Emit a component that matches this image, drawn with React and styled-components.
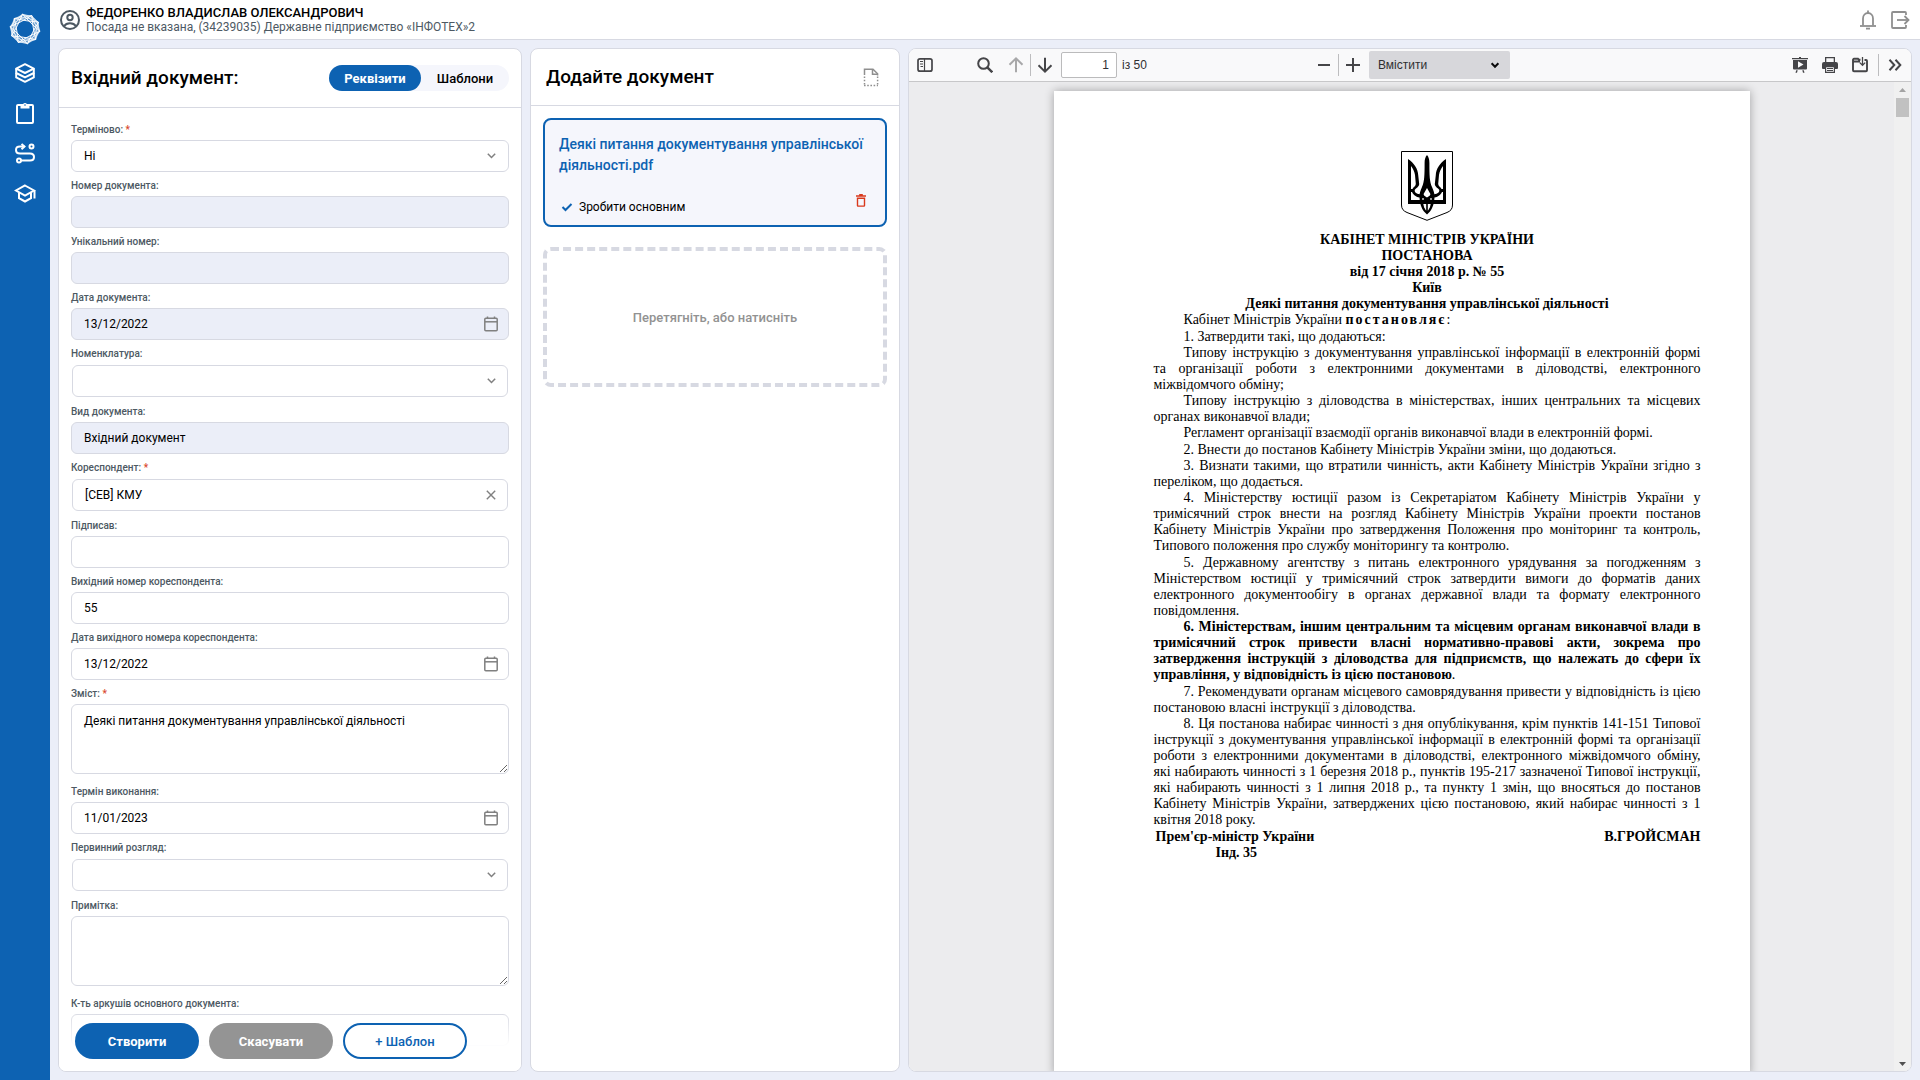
import React, { useState } from "react";
import styled, { createGlobalStyle, css } from "styled-components";

const blue = "#0d62b2";
const line = "#d7d9e2";
const tint = "#ebeef8";
const ui = `Roboto, "Noto Sans", sans-serif`;

const GlobalStyle = createGlobalStyle`
  *, *::before, *::after { box-sizing: border-box; }
  body { margin: 0; background: ${tint}; font-family: ${ui}; color: #000; }
  button, input, select, textarea { font-family: inherit; color: inherit; margin: 0; }
  p, h1, h2 { margin: 0; }
`;

/* ---------- shell ---------- */

const Shell = styled.div`
  display: flex;
  height: 100vh;
`;

const Sidebar = styled.nav`
  flex: none;
  width: 50px;
  display: flex;
  flex-direction: column;
  align-items: center;
  padding-top: 13px;
  background: ${blue};
`;

const Logo = styled.a`
  display: block;
  height: 32px;
  margin-bottom: 8px;
`;

const NavLink = styled.a`
  width: 40px;
  height: 40px;
  display: flex;
  align-items: center;
  justify-content: center;
  color: #fff;
`;

const Content = styled.div`
  flex: 1;
  min-width: 0;
  display: flex;
  flex-direction: column;
`;

const TopBar = styled.header`
  flex: none;
  height: 40px;
  display: flex;
  align-items: center;
  padding: 0 10px;
  background: #fff;
  border-bottom: 1px solid ${line};
`;

const User = styled.div`
  flex: 1;
  display: flex;
  align-items: center;
  gap: 6px;
  color: #4d5963;
`;

const UserText = styled.div`
  font-size: 12px;
  line-height: 15px;
`;

const UserName = styled.div`
  font-size: 13px;
  font-weight: 500;
  color: #000;
`;

const PlainButton = styled.button`
  padding: 0;
  border: 0;
  background: none;
  display: flex;
  align-items: center;
  justify-content: center;
  color: ${(p) => p.$color || "#8f8f8f"};
  cursor: pointer;
`;

const TopActions = styled.div`
  display: flex;
  align-items: center;
  gap: 14px;
`;

const Workspace = styled.main`
  flex: 1;
  min-height: 0;
  display: grid;
  grid-template-columns: minmax(0, 464fr) minmax(0, 370fr) minmax(0, 1004fr);
  gap: 8px;
  padding: 8px;
`;

const Panel = styled.section`
  position: relative;
  min-height: 0;
  display: flex;
  flex-direction: column;
  background: #fff;
  border: 1px solid ${line};
  border-radius: 8px;
  overflow: hidden;
`;

const PanelHeader = styled.div`
  flex: none;
  display: flex;
  align-items: center;
  justify-content: space-between;
  height: ${(p) => p.$height}px;
  padding: ${(p) => p.$padding};
  border-bottom: 1px solid ${line};
`;

const PanelTitle = styled.h1`
  font-size: 19px;
  line-height: 24px;
  font-weight: 500;
`;

/* ---------- form ---------- */

const Tabs = styled.div`
  display: flex;
  height: 26px;
  border-radius: 13px;
  background: #f5f6fc;
`;

const Tab = styled.button`
  height: 26px;
  width: ${(p) => (p.$active ? 92 : 88)}px;
  padding: 0;
  border: 0;
  border-radius: 13px;
  font-size: 13px;
  font-weight: ${(p) => (p.$active ? 700 : 500)};
  color: ${(p) => (p.$active ? "#fff" : "#000")};
  background: ${(p) => (p.$active ? blue : "transparent")};
`;

const FormBody = styled.form`
  flex: 1;
  min-height: 0;
  overflow: hidden;
  padding: 8px 12px 80px;
`;

const Field = styled.div`
  padding-top: 6px;
`;

const Label = styled.label`
  display: block;
  height: 16px;
  margin-bottom: 2px;
  font-size: 10px;
  line-height: 16px;
  font-weight: 500;
  color: #4d5963;
`;

const Required = styled.span`
  color: #d9472b;
`;

const Box = styled.div`
  position: relative;
  padding: ${(p) => (p.$inset ? "1px" : "0")};
`;

const control = css`
  display: block;
  width: 100%;
  border: 1px solid ${line};
  border-radius: 6px;
  font-size: 12px;
  line-height: 16px;
  color: #000;
  opacity: 1;
  appearance: none;
  outline: none;
  background: ${(p) => (p.$tinted ? tint : "#fff")};
`;

const TextInput = styled.input`
  ${control}
  height: 32px;
  padding: 0 40px 0 12px;
`;

const Select = styled.select`
  ${control}
  height: 32px;
  padding: 0 40px 0 12px;
`;

const Area = styled.textarea`
  ${control}
  height: 70px;
  margin-bottom: 4px;
  padding: 8px 12px;
  resize: vertical;
`;

const Adornment = styled.span`
  position: absolute;
  top: 0;
  bottom: 0;
  right: 0;
  width: 36px;
  display: flex;
  align-items: center;
  justify-content: center;
  color: #808080;
  pointer-events: none;
  button { pointer-events: auto; }
`;

const FormFooter = styled.div`
  position: absolute;
  left: 0;
  right: 0;
  bottom: 0;
  display: flex;
  gap: 10px;
  padding: 12px 16px;
  background: linear-gradient(rgba(255, 255, 255, 0), #fff 60%);
`;

const ActionButton = styled.button`
  width: 124px;
  height: 36px;
  padding: 0;
  border: ${(p) => (p.$outline ? `2px solid ${blue}` : "0")};
  border-radius: 18px;
  font-size: 13px;
  font-weight: ${(p) => (p.$outline ? 500 : 700)};
  color: ${(p) => (p.$outline ? blue : "#fff")};
  background: ${(p) => (p.$outline ? "#fff" : p.$muted ? "#949494" : blue)};
`;

/* ---------- documents ---------- */

const DocList = styled.div`
  display: flex;
  flex-direction: column;
  gap: 20px;
  padding: 12px;
`;

const DocCard = styled.article`
  display: flex;
  flex-direction: column;
  justify-content: space-between;
  gap: 18px;
  padding: 14px 14px 8px;
  border: 2px solid ${blue};
  border-radius: 8px;
  background: #f5f6fc;
`;

const DocName = styled.a`
  font-size: 14px;
  line-height: 21px;
  font-weight: 500;
  color: ${blue};
  text-decoration: none;
`;

const DocActions = styled.div`
  display: flex;
  justify-content: space-between;
  align-items: flex-start;
  padding-right: 5px;
`;

const MainMark = styled.button`
  display: flex;
  align-items: center;
  gap: 6px;
  height: 20px;
  padding: 0 0 0 2px;
  margin-top: 3px;
  border: 0;
  background: none;
  font-size: 12px;
  line-height: 16px;
  svg { color: ${blue}; }
`;

const DropZone = styled.button`
  height: 140px;
  border: 4px dashed ${line};
  border-radius: 8px;
  background: #fff;
  font-size: 13px;
  font-weight: 500;
  color: #929292;
`;

/* ---------- viewer ---------- */

const Toolbar = styled.div`
  flex: none;
  display: grid;
  grid-template-columns: 1fr auto 1fr;
  height: 33px;
  padding: 0 2px;
  background: #f9f9fa;
  border-bottom: 1px solid #c7c7c9;
  font-family: "Liberation Sans", Arial, sans-serif;
  font-size: 12px;
  color: #2f2f31;
`;

const ToolGroup = styled.div`
  display: flex;
  align-items: center;
  gap: ${(p) => p.$gap || 0}px;
  justify-content: ${(p) => (p.$end ? "flex-end" : "flex-start")};
`;

const ToolButton = styled.button`
  width: 28px;
  height: 28px;
  margin-right: ${(p) => p.$after || 0}px;
  padding: 0;
  border: 0;
  background: none;
  color: #454548;
  opacity: ${(p) => (p.disabled ? 0.45 : 1)};
  display: flex;
  align-items: center;
  justify-content: center;
`;

const ToolRule = styled.span`
  width: 1px;
  height: 22px;
  background: #bdbdbf;
`;

const PageInput = styled.input`
  width: 56px;
  height: 26px;
  margin: 0 5px 0 2px;
  padding: 0 7px;
  border: 1px solid #bbbbbc;
  border-radius: 2px;
  background: #fff;
  font-size: 12px;
  text-align: right;
`;

const ScaleBox = styled.div`
  position: relative;
  margin-left: 2px;
`;

const ScaleSelect = styled.select`
  display: block;
  width: 141px;
  height: 28px;
  padding: 0 30px 0 9px;
  border: 0;
  border-radius: 2px;
  appearance: none;
  background: #d7d7db;
  color: #2f2f31;
  font-size: 12px;
`;

const ScaleCaret = styled(Adornment)`
  width: 30px;
  color: #0c0c0d;
`;

const ViewArea = styled.div`
  flex: 1;
  min-height: 0;
  display: flex;
  background: #ececee;
`;

const Canvas = styled.div`
  flex: 1;
  min-width: 0;
  overflow: hidden;
  padding-top: 9px;
`;

const Sheet = styled.article`
  width: 696px;
  max-width: 100%;
  aspect-ratio: 210 / 297;
  margin: 0 auto;
  padding: 60px 49px 0 100px;
  background: #fff;
  box-shadow: 0 0 9px rgba(0, 0, 0, 0.32);
  font-family: "Liberation Serif", "Times New Roman", serif;
  font-size: 14px;
  line-height: 16px;
`;

const Emblem = styled.svg`
  display: block;
  margin: 0 auto 11px;
`;

const Heading = styled.p`
  text-align: center;
  font-weight: 700;
`;

const Clause = styled.p`
  text-align: justify;
  text-indent: 30px;
  padding-top: ${(p) => (p.$spaced ? 1 : 0)}px;
  font-weight: ${(p) => (p.$bold ? 700 : 400)};
`;

const Spaced = styled.b`
  letter-spacing: 2px;
`;

const Regular = styled.span`
  font-weight: 400;
`;

const Signature = styled.div`
  display: flex;
  justify-content: space-between;
  padding: 1px 0 0 2px;
  font-weight: 700;
`;

const Index = styled.p`
  padding-left: 62px;
  font-weight: 700;
`;

const ScrollTrack = styled.div`
  flex: none;
  width: 17px;
  display: flex;
  flex-direction: column;
  justify-content: space-between;
  align-items: center;
  padding: 6px 0 5px;
  background: #f0f0f0;
`;

const ScrollTop = styled.div`
  display: flex;
  flex-direction: column;
  align-items: center;
  gap: 6px;
`;

const Thumb = styled.div`
  width: 13px;
  height: 19px;
  background: #c1c1c1;
`;

/* ---------- icons ---------- */

const Stroke = ({ w, h, sw = 2, children, ...rest }) => (
  <svg width={w} height={h} viewBox={`0 0 ${w} ${h}`} fill="none" stroke="currentColor" strokeWidth={sw} aria-hidden="true" {...rest}>
    {children}
  </svg>
);

const SPOKES = 10;
const ring = Array.from({ length: SPOKES }, (_, i) => {
  const a = (i * 2 * Math.PI) / SPOKES + 0.15;
  return [16 + 15 * Math.cos(a), 16 + 15 * Math.sin(a)];
});
const chord = (step, bulge) =>
  ring
    .map(([x, y], i) => {
      const [u, v] = ring[(i + step) % SPOKES];
      const cx = 16 + ((x + u) / 2 - 16) * bulge;
      const cy = 16 + ((y + v) / 2 - 16) * bulge;
      return `M${x.toFixed(2)} ${y.toFixed(2)}Q${cx.toFixed(2)} ${cy.toFixed(2)} ${u.toFixed(2)} ${v.toFixed(2)}`;
    })
    .join("");

const LogoIcon = () => (
  <svg width="32" height="32" viewBox="0 0 32 32" fill="none" stroke="#fff" aria-hidden="true">
    <circle cx="16" cy="16" r="11.5" strokeWidth="6" opacity="0.25" />
    <path d={chord(3, 0.9)} strokeWidth="1" />
    <path d={chord(3, 1.5)} strokeWidth="0.8" opacity="0.9" />
    <path d={chord(2, 1.2)} strokeWidth="0.8" opacity="0.8" />
  </svg>
);

const LayersIcon = () => (
  <Stroke w={20} h={20} strokeLinejoin="round">
    <path d="M10 1.2 18.8 5.6 10 10 1.2 5.6Z" />
    <path d="M1.2 5.6V10L10 14.4 18.8 10V5.6" />
    <path d="M1.2 10V14.4L10 18.8 18.8 14.4V10" />
  </Stroke>
);

const ClipboardIcon = () => (
  <Stroke w={18} h={22}>
    <rect x="1" y="3" width="16" height="18" rx="1" />
    <path d="M4.5 2.5H7a2.1 2.1 0 0 1 4 0h2.5V6.5h-9Z" fill="currentColor" stroke="none" />
    <circle cx="9" cy="3" r="0.8" fill={blue} stroke="none" />
  </Stroke>
);

const RouteIcon = () => (
  <Stroke w={20} h={21}>
    <path d="M9.5 3.6H5C2.4 3.6 1 5.1 1 7s1.4 3.5 4 3.5h10c2.6 0 4 1.5 4 3.5s-1.4 3.5-4 3.5H6" />
    <path d="M6.5.9 9.5 3.6 6.5 6.3" />
    <circle cx="16.5" cy="3.6" r="2" />
    <circle cx="4" cy="17.5" r="2" />
  </Stroke>
);

const SchoolIcon = () => (
  <Stroke w={22} h={19}>
    <path d="M11 1.5 20 6.5 11 11.5 2 6.5Z" />
    <path d="M5 8.5V14.2L11 17.5 17 14.2V8.5" />
    <path d="M20.5 6.5V14.5" />
  </Stroke>
);

const UserIcon = () => (
  <Stroke w={20} h={20}>
    <circle cx="10" cy="10" r="9" />
    <circle cx="10" cy="7.5" r="2.7" />
    <path d="M4 16.3C5.5 14 7.5 13.3 10 13.3s4.5.7 6 3" />
  </Stroke>
);

const BellIcon = () => (
  <Stroke w={18} h={20} sw={1.8}>
    <path d="M4 15.5V8.5C4 5.3 6.2 3 9 3s5 2.3 5 5.5v7" />
    <path d="M1 16H17" />
    <path d="M9 .4V3" />
    <path d="M7 18.6H11" />
  </Stroke>
);

const LogoutIcon = () => (
  <Stroke w={19} h={18} sw={1.8}>
    <path d="M15 4V2a1 1 0 0 0-1-1H2a1 1 0 0 0-1 1v14a1 1 0 0 0 1 1h12a1 1 0 0 0 1-1v-2" />
    <path d="M6 9H17" />
    <path d="M13.5 5 17.5 9 13.5 13" />
  </Stroke>
);

const ChevronIcon = () => (
  <Stroke w={9} h={6} sw={1.5}>
    <path d="M.8.8 4.5 4.5 8.2.8" />
  </Stroke>
);

const CalendarIcon = () => (
  <Stroke w={14} h={16} sw={1.5}>
    <rect x=".8" y="2.2" width="12.4" height="12.6" rx="1" />
    <path d="M1 5.8H13" />
    <path d="M3.5.5V2.5M10.5.5V2.5" />
  </Stroke>
);

const CloseIcon = () => (
  <Stroke w={10} h={10} sw={1.4}>
    <path d="M.8.8 9.2 9.2M9.2.8.8 9.2" />
  </Stroke>
);

const DraftIcon = () => (
  <Stroke w={16} h={19} sw={1.5}>
    <path d="M1.5 7V1.2H10L14.6 5.8V7.5" />
    <path d="M9.5 1.2V6.2H14.6" />
    <path d="M1.5 8.5V18M14.6 8.5V18" strokeDasharray="1.6 1.6" />
    <path d="M1 17.5H15" strokeDasharray="1.6 1.6" />
  </Stroke>
);

const CheckIcon = () => (
  <Stroke w={12} h={10} sw={2}>
    <path d="M1.5 5 4.5 8 10.5 2" />
  </Stroke>
);

const TrashIcon = () => (
  <Stroke w={10} h={13} sw={1.4}>
    <path d="M0 2H10M3.2.8H6.8" />
    <path d="M1.5 4.2H8.5V11.5a.6.6 0 0 1-.6.6H2.1a.6.6 0 0 1-.6-.6Z" />
  </Stroke>
);

const PaneIcon = () => (
  <Stroke w={16} h={16} sw={1.7}>
    <rect x="1" y="1.8" width="14" height="12.4" rx="2" />
    <path d="M7.5 2V14" strokeWidth="1.2" />
    <path d="M3 4.5H6M3 7H6M3.5 9.5H6" strokeWidth="1" />
  </Stroke>
);

const SearchIcon = () => (
  <Stroke w={16} h={16}>
    <circle cx="6.5" cy="6.5" r="5.3" />
    <path d="M10.3 10.3 15.3 15.3" strokeWidth="2.4" />
  </Stroke>
);

const ArrowIcon = ({ down }) => (
  <Stroke w={16} h={16} sw={2}>
    <path d={down ? "M8 .8V14.5M1.5 8.3 8 14.6 14.5 8.3" : "M8 15.2V1.5M1.5 7.7 8 1.4 14.5 7.7"} />
  </Stroke>
);

const MinusIcon = () => (
  <Stroke w={14} h={14}>
    <path d="M1 7H13" />
  </Stroke>
);

const PlusIcon = () => (
  <Stroke w={14} h={14}>
    <path d="M0 7H14M7 0V14" />
  </Stroke>
);

const PresentIcon = () => (
  <svg width="16" height="16" viewBox="0 0 16 16" fill="currentColor" aria-hidden="true">
    <path d="M0 1h7V0h2v1h7v1.3H0Z" />
    <path fillRule="evenodd" d="M1 3h14v8.5a1 1 0 0 1-1 1H2a1 1 0 0 1-1-1ZM6 4.3v6.4L11.5 7.5Z" />
    <path d="M4.2 13.2h1.5L5 15.8H3.5ZM10.3 13.2h1.5l.7 2.6H11Z" />
  </svg>
);

const PrintIcon = () => (
  <svg width="16" height="16" viewBox="0 0 16 16" fill="currentColor" aria-hidden="true">
    <path d="M3 0h10v5h-1.3V1.2H4.3V5H3Z" />
    <path d="M2 5h12a2 2 0 0 1 2 2v4a1 1 0 0 1-1 1h-2V9H3v3H1a1 1 0 0 1-1-1V7a2 2 0 0 1 2-2Z" />
    <path fillRule="evenodd" d="M3 9h10v7H3ZM4.2 10.2v4.6h7.6v-4.6Z" />
    <path d="M5 11h6v1H5ZM5 13h6v1H5Z" />
  </svg>
);

const FolderIcon = () => (
  <svg width="16" height="16" viewBox="0 0 16 16" fill="none" stroke="currentColor" aria-hidden="true">
    <path d="M8 4.5H1.5M8.5 2.8H7L6 1.8H2a1 1 0 0 0-1 1v10.4a1 1 0 0 0 1 1h12a1 1 0 0 0 1-1V4a1 1 0 0 0-1-1h-1.5" strokeWidth="1.9" />
    <path d="M10.5 0V8M7.8 5.6 10.5 8.3 13.2 5.6" strokeWidth="1.3" />
  </svg>
);

const MoreIcon = () => (
  <Stroke w={14} h={12}>
    <path d="M1.5.8 6.3 6 1.5 11.2M7.5.8 12.3 6 7.5 11.2" />
  </Stroke>
);

const CaretIcon = () => (
  <Stroke w={10} h={7} sw={2}>
    <path d="M1.6 1.2 5 4.8 8.4 1.2" />
  </Stroke>
);

const Triangle = ({ down }) => (
  <svg width="7" height="4" viewBox="0 0 7 4" aria-hidden="true">
    <path d={down ? "M0 0H7L3.5 4Z" : "M0 4H7L3.5 0Z"} fill={down ? "#505050" : "#a3a3a3"} />
  </svg>
);

const Trident = () => (
  <Emblem width="53" height="70" viewBox="0 0 53 70" fill="none" stroke="#000" role="img" aria-label="Герб України">
    <path d="M.5.5H51.5V54C51.5 58 49.5 60 46 61.5L26 69.3 6 61.5C2.5 60 .5 58 .5 54Z" strokeWidth="1" />
    <path fill="#000" stroke="none" fillRule="evenodd" d="M7 8C13 12 17 18 17.2 24L18.2 33C18.2 34.5 17 36 15 37.5L14 38.5C13 40 14.5 42.5 17.5 43L20 43.5V46.5C16 46.5 12.5 44.5 11 41H10V49H42V41H41C39.5 44.5 36 46.5 32 46.5V43.5L34.5 43C37.5 42.5 39 40 38 38.5L37 37.5C35 36 33.8 34.5 33.8 33L34.8 24C35 18 39 12 45 8V53H7ZM10 15V38H11.5C12 36.5 14.8 35 14.8 33L14 24C13.5 20.5 12 17.5 10 15ZM42 15C40 17.5 38.5 20.5 38 24L37.2 33C37.2 35 40 36.5 40.5 38H42Z" />
    <path fill="#000" stroke="none" fillRule="evenodd" d="M26 4C27.7 6 28.4 8.5 28.4 12C28.4 24 28.6 31 31 36C32.5 39.5 33.5 42 33.5 45C33.5 52 31.5 57.5 29 60.5L26 63.5 23 60.5C20.5 57.5 18.5 52 18.5 45C18.5 42 19.5 39.5 21 36C23.4 31 23.6 24 23.6 12C23.6 8.5 24.3 6 26 4ZM26 37L22.6 43C22.6 45 24.5 45.3 26 46.5C27.5 45.3 29.4 45 29.4 43Z" />
    <path d="M22 47V49M30 47V49M23 53.5C23.3 55.5 23.8 57 24.6 58V53.5ZM29 53.5C28.7 55.5 28.2 57 27.4 58V53.5Z" stroke="#fff" strokeWidth="1.2" fill="#fff" />
  </Emblem>
);

/* ---------- data ---------- */

const fields = [
  { id: "urgent", label: "Терміново:", required: true, type: "select", value: "Ні" },
  { id: "number", label: "Номер документа:", tinted: true, value: "" },
  { id: "unique", label: "Унікальний номер:", tinted: true, value: "" },
  { id: "date", label: "Дата документа:", type: "date", tinted: true, value: "13/12/2022" },
  { id: "nomenclature", label: "Номенклатура:", type: "select", inset: true, value: "" },
  { id: "kind", label: "Вид документа:", tinted: true, value: "Вхідний документ" },
  { id: "correspondent", label: "Кореспондент:", required: true, type: "clear", inset: true, value: "[СЕВ] КМУ" },
  { id: "signed", label: "Підписав:", value: "" },
  { id: "outNumber", label: "Вихідний номер кореспондента:", value: "55" },
  { id: "outDate", label: "Дата вихідного номера кореспондента:", type: "date", value: "13/12/2022" },
  { id: "summary", label: "Зміст:", required: true, type: "area", value: "Деякі питання документування управлінської діяльності" },
  { id: "deadline", label: "Термін виконання:", type: "date", value: "11/01/2023" },
  { id: "review", label: "Первинний розгляд:", type: "select", inset: true, value: "" },
  { id: "note", label: "Примітка:", type: "area", value: "" },
  { id: "sheets", label: "К-ть аркушів основного документа:", value: "" },
];

const effectiveDates =
  "8. Ця постанова набирає чинності з дня опублікування, крім пунктів 141-151 Типової інструкції з документування управлінської інформації в електронній формі та організації роботи з електронними документами в діловодстві, електронного міжвідомчого обміну, які\u00a0набирають чинності з 1 березня 2018 р., пунктів 195-217 зазначеної Типової інструкції, які\u00a0набирають чинності з 1 липня 2018 р., та пункту 1 змін, що вносяться до постанов Кабінету Міністрів України, затверджених цією постановою, який набирає чинності з 1 квітня 2018 року.";

const FormField = ({ id, label, required, type, tinted, inset, value }) => (
  <Field>
    <Label htmlFor={id}>
      {label}
      {required && <Required> *</Required>}
    </Label>
    <Box $inset={inset}>
      {type === "select" ? (
        <Select id={id} defaultValue={value}>
          <option>{value}</option>
        </Select>
      ) : type === "area" ? (
        <Area id={id} defaultValue={value} />
      ) : (
        <TextInput id={id} type="text" $tinted={tinted} readOnly={tinted} defaultValue={value} />
      )}
      {type === "select" && (
        <Adornment>
          <ChevronIcon />
        </Adornment>
      )}
      {type === "date" && (
        <Adornment>
          <PlainButton type="button" aria-label="Обрати дату" $color="#808080">
            <CalendarIcon />
          </PlainButton>
        </Adornment>
      )}
      {type === "clear" && (
        <Adornment>
          <PlainButton type="button" aria-label="Очистити" $color="#808080">
            <CloseIcon />
          </PlainButton>
        </Adornment>
      )}
    </Box>
  </Field>
);

const nav = [
  ["Документи", LayersIcon],
  ["Завдання", ClipboardIcon],
  ["Маршрути", RouteIcon],
  ["Навчання", SchoolIcon],
];

export default function App() {
  const [page, setPage] = useState("1");
  return (
    <>
      <GlobalStyle />
      <Shell>
        <Sidebar>
          <Logo href="#" aria-label="Головна">
            <LogoIcon />
          </Logo>
          {nav.map(([name, Icon]) => (
            <NavLink key={name} href="#" aria-label={name}>
              <Icon />
            </NavLink>
          ))}
        </Sidebar>
        <Content>
          <TopBar>
            <User>
              <UserIcon />
              <UserText>
                <UserName>ФЕДОРЕНКО ВЛАДИСЛАВ ОЛЕКСАНДРОВИЧ</UserName>
                Посада не вказана, (34239035) Державне підприємство «ІНФОТЕХ»2
              </UserText>
            </User>
            <TopActions>
              <PlainButton aria-label="Сповіщення">
                <BellIcon />
              </PlainButton>
              <PlainButton aria-label="Вийти">
                <LogoutIcon />
              </PlainButton>
            </TopActions>
          </TopBar>
          <Workspace>
            <Panel>
              <PanelHeader $height={59} $padding="0 12px">
                <PanelTitle>Вхідний документ:</PanelTitle>
                <Tabs>
                  <Tab type="button" $active>Реквізити</Tab>
                  <Tab type="button">Шаблони</Tab>
                </Tabs>
              </PanelHeader>
              <FormBody>
                {fields.map((f) => (
                  <FormField key={f.id} {...f} />
                ))}
              </FormBody>
              <FormFooter>
                <ActionButton type="button">Створити</ActionButton>
                <ActionButton type="button" $muted>Скасувати</ActionButton>
                <ActionButton type="button" $outline>+ Шаблон</ActionButton>
              </FormFooter>
            </Panel>

            <Panel>
              <PanelHeader $height={57} $padding="0 20px 0 15px">
                <PanelTitle as="h2">Додайте документ</PanelTitle>
                <PlainButton aria-label="Новий документ">
                  <DraftIcon />
                </PlainButton>
              </PanelHeader>
              <DocList>
                <DocCard>
                  <DocName href="#">Деякі питання документування управлінської діяльності.pdf</DocName>
                  <DocActions>
                    <MainMark type="button">
                      <CheckIcon />
                      Зробити основним
                    </MainMark>
                    <PlainButton aria-label="Видалити" $color="#d9391c">
                      <TrashIcon />
                    </PlainButton>
                  </DocActions>
                </DocCard>
                <DropZone type="button">Перетягніть, або натисніть</DropZone>
              </DocList>
            </Panel>

            <Panel>
              <Toolbar>
                <ToolGroup>
                  <ToolButton aria-label="Бічна панель" $after={32}><PaneIcon /></ToolButton>
                  <ToolButton aria-label="Знайти" $after={3}><SearchIcon /></ToolButton>
                  <ToolButton aria-label="Попередня сторінка" disabled><ArrowIcon /></ToolButton>
                  <ToolRule />
                  <ToolButton aria-label="Наступна сторінка"><ArrowIcon down /></ToolButton>
                  <PageInput aria-label="Сторінка" value={page} onChange={(e) => setPage(e.target.value)} />
                  <span>із 50</span>
                </ToolGroup>
                <ToolGroup>
                  <ToolButton aria-label="Зменшити"><MinusIcon /></ToolButton>
                  <ToolRule />
                  <ToolButton aria-label="Збільшити"><PlusIcon /></ToolButton>
                  <ScaleBox>
                    <ScaleSelect aria-label="Масштаб" defaultValue="Вмістити">
                      <option>Вмістити</option>
                    </ScaleSelect>
                    <ScaleCaret>
                      <CaretIcon />
                    </ScaleCaret>
                  </ScaleBox>
                </ToolGroup>
                <ToolGroup $end $gap={2}>
                  <ToolButton aria-label="Режим презентації"><PresentIcon /></ToolButton>
                  <ToolButton aria-label="Друк"><PrintIcon /></ToolButton>
                  <ToolButton aria-label="Завантажити" $after={2}><FolderIcon /></ToolButton>
                  <ToolRule />
                  <ToolButton aria-label="Інструменти"><MoreIcon /></ToolButton>
                </ToolGroup>
              </Toolbar>
              <ViewArea>
                <Canvas>
                  <Sheet>
                    <Trident />
                    <Heading>КАБІНЕТ МІНІСТРІВ УКРАЇНИ</Heading>
                    <Heading>ПОСТАНОВА</Heading>
                    <Heading>від 17 січня 2018 р. № 55</Heading>
                    <Heading>Київ</Heading>
                    <Heading>Деякі питання документування управлінської діяльності</Heading>
                    <Clause>Кабінет Міністрів України <Spaced>постановляє</Spaced>:</Clause>
                    <Clause $spaced>1. Затвердити такі, що додаються:</Clause>
                    <Clause>Типову інструкцію з документування управлінської інформації в електронній формі та організації роботи з електронними документами в діловодстві, електронного міжвідомчого обміну;</Clause>
                    <Clause>Типову інструкцію з діловодства в міністерствах, інших центральних та місцевих органах виконавчої влади;</Clause>
                    <Clause>Регламент організації взаємодії органів виконавчої влади в електронній формі.</Clause>
                    <Clause $spaced>2. Внести до постанов Кабінету Міністрів України зміни, що додаються.</Clause>
                    <Clause>3. Визнати такими, що втратили чинність, акти Кабінету Міністрів України згідно з переліком, що додається.</Clause>
                    <Clause>4. Міністерству юстиції разом із Секретаріатом Кабінету Міністрів України у тримісячний строк внести на розгляд Кабінету Міністрів України проекти постанов Кабінету Міністрів України про затвердження Положення про моніторинг та контроль, Типового положення про службу моніторингу та контролю.</Clause>
                    <Clause $spaced>5. Державному агентству з питань електронного урядування за погодженням з Міністерством юстиції у тримісячний строк затвердити вимоги до форматів даних електронного документообігу в органах державної влади та формату електронного повідомлення.</Clause>
                    <Clause $bold>6. Міністерствам, іншим центральним та місцевим органам виконавчої влади в тримісячний строк привести власні нормативно-правові акти, зокрема про затвердження інструкцій з діловодства для підприємств, що належать до сфери їх управління, у відповідність із цією постановою<Regular>.</Regular></Clause>
                    <Clause $spaced>7. Рекомендувати органам місцевого самоврядування привести у відповідність із цією постановою власні інструкції з діловодства.</Clause>
                    <Clause>{effectiveDates}</Clause>
                    <Signature>
                      <span>Прем'єр-міністр України</span>
                      <span>В.ГРОЙСМАН</span>
                    </Signature>
                    <Index>Інд. 35</Index>
                  </Sheet>
                </Canvas>
                <ScrollTrack>
                  <ScrollTop>
                    <Triangle />
                    <Thumb />
                  </ScrollTop>
                  <Triangle down />
                </ScrollTrack>
              </ViewArea>
            </Panel>
          </Workspace>
        </Content>
      </Shell>
    </>
  );
}
